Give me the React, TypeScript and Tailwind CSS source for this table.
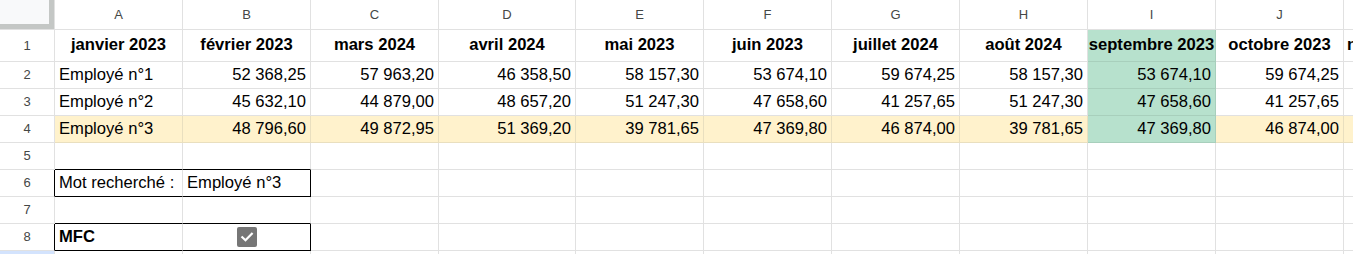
import React from "react";
import clsx from "clsx";

type Tone = "none" | "yellow" | "green";

type CellSpec = {
  text?: string;
  align?: "left" | "right" | "center";
  bold?: boolean;
  tone?: Tone;
  blackR?: boolean;
  blackB?: boolean;
  check?: boolean;
};

const LETTERS = ["A", "B", "C", "D", "E", "F", "G", "H", "I", "J", "K"];

const MONTHS = [
  "janvier 2023",
  "février 2023",
  "mars 2024",
  "avril 2024",
  "mai 2023",
  "juin 2023",
  "juillet 2024",
  "août 2024",
  "septembre 2023",
  "octobre 2023",
  "novembre 2023",
];

const EMPLOYEES: [string, string[]][] = [
  [
    "Employé n°1",
    ["52 368,25", "57 963,20", "46 358,50", "58 157,30", "53 674,10", "59 674,25", "58 157,30", "53 674,10", "59 674,25"],
  ],
  [
    "Employé n°2",
    ["45 632,10", "44 879,00", "48 657,20", "51 247,30", "47 658,60", "41 257,65", "51 247,30", "47 658,60", "41 257,65"],
  ],
  [
    "Employé n°3",
    ["48 796,60", "49 872,95", "51 369,20", "39 781,65", "47 369,80", "46 874,00", "39 781,65", "47 369,80", "46 874,00"],
  ],
];

function CheckBox() {
  return (
    <span className="flex h-[20px] w-[20px] items-center justify-center rounded-[2px] bg-[#767676]">
      <svg width="14" height="14" viewBox="0 0 14 14" fill="none">
        <path d="M2.3 7.2 L5.5 10.3 L11.8 3.8" stroke="#ffffff" strokeWidth="2.2" strokeLinecap="square" />
      </svg>
    </span>
  );
}

function Cell({ spec }: { spec: CellSpec }) {
  const tone = spec.tone ?? "none";
  return (
    <div
      className={clsx(
        "flex items-center whitespace-nowrap border-r border-b px-[4px] text-[16.6px] text-black",
        tone === "yellow" && "bg-[#fff2cc] border-[#e9dfbf]",
        tone === "green" && "bg-[#b7e1cd] border-[#a8cfbc]",
        tone === "none" && "border-[#e1e1e1]",
        spec.blackR && "border-r-black",
        spec.blackB && "border-b-black",
        spec.align === "right" && "justify-end",
        spec.align === "center" && "justify-center px-0",
        spec.bold && "font-bold"
      )}
    >
      {spec.check ? <CheckBox /> : spec.text}
    </div>
  );
}

function RowHeader({ n, blackR, active }: { n?: number; blackR?: boolean; active?: boolean }) {
  return (
    <div
      className={clsx(
        "flex items-center justify-center border-r border-b text-[13px] text-[#444746]",
        blackR ? "border-r-black border-b-[#e1e1e1]" : "border-[#e1e1e1]",
        active && "bg-[#d3e3fd]"
      )}
    >
      {n}
    </div>
  );
}

function buildRows(): CellSpec[][] {
  const rows: CellSpec[][] = [];
  // row 1: month titles
  rows.push(
    MONTHS.map((m, i) => ({ text: m, bold: true, align: "center", tone: i === 8 ? "green" : "none" }))
  );
  // rows 2-4: employees
  EMPLOYEES.forEach(([name, values], r) => {
    const isThird = r === 2;
    const row: CellSpec[] = [{ text: name, tone: isThird ? "yellow" : "none" }];
    values.forEach((v, i) => {
      const col = i + 1;
      row.push({ text: v, align: "right", tone: col === 8 ? "green" : isThird ? "yellow" : "none" });
    });
    row.push({ tone: isThird ? "yellow" : "none" });
    rows.push(row);
  });
  // row 5: top edge of the search box
  rows.push(LETTERS.map((_, i) => ({ blackB: i < 2 })));
  // row 6: search term
  rows.push(
    LETTERS.map((_, i) =>
      i === 0
        ? { text: "Mot recherché :", blackB: true }
        : i === 1
        ? { text: "Employé n°3", blackB: true, blackR: true }
        : {}
    )
  );
  // row 7: top edge of the MFC box
  rows.push(LETTERS.map((_, i) => ({ blackB: i < 2 })));
  // row 8: conditional-formatting toggle
  rows.push(
    LETTERS.map((_, i) =>
      i === 0
        ? { text: "MFC", bold: true, blackB: true }
        : i === 1
        ? { check: true, align: "center", blackB: true, blackR: true }
        : {}
    )
  );
  // row 9
  rows.push(LETTERS.map(() => ({})));
  return rows;
}

export default function App() {
  const rows = buildRows();
  return (
    <div className="h-[254px] w-[1353px] overflow-hidden bg-white font-['Liberation_Sans',Arial,sans-serif]">
      <div className="grid w-[1471px] grid-cols-[55px_128px_128px_128px_137px_128px_128px_128px_128px_128px_128px_128px] grid-rows-[30px_32px_27px_27px_27px_27px_27px_27px_27px_27px]">
        {/* corner */}
        <div className="border-r border-b border-[#e1e1e1]">
          <div className="h-full w-full border-r-[5px] border-b-[5px] border-[#c4c7c5] bg-[#f8f9fa]" />
        </div>
        {LETTERS.map((l) => (
          <div
            key={l}
            className="flex items-center justify-center border-r border-b border-[#e1e1e1] text-[13px] text-[#444746]"
          >
            {l}
          </div>
        ))}
        {rows.map((row, r) => (
          <React.Fragment key={r}>
            <RowHeader
              n={r < 8 ? r + 1 : undefined}
              blackR={r === 5 || r === 7}
              active={r === 8}
            />
            {row.map((spec, c) => (
              <Cell key={c} spec={spec} />
            ))}
          </React.Fragment>
        ))}
      </div>
    </div>
  );
}
